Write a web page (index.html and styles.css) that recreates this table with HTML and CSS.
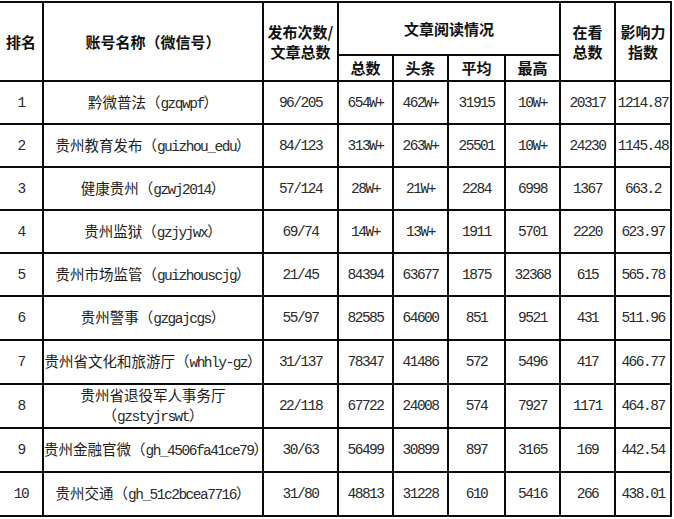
FILE: index.html
```html
<!DOCTYPE html>
<html lang="zh-CN">
<head>
<meta charset="utf-8">
<title>贵州政务微信排行</title>
<link rel="stylesheet" href="styles.css">
</head>
<body>
<table class="rank">
  <colgroup>
    <col class="c-rank"><col class="c-name"><col class="c-pub">
    <col class="c-n"><col class="c-n"><col class="c-avg"><col class="c-n">
    <col class="c-n"><col class="c-idx">
  </colgroup>
  <thead>
    <tr class="h-top">
      <th rowspan="2">排名</th>
      <th rowspan="2">账号名称（微信号）</th>
      <th rowspan="2">发布次数/<br>文章总数</th>
      <th colspan="4">文章阅读情况</th>
      <th rowspan="2">在看<br>总数</th>
      <th rowspan="2">影响力<br>指数</th>
    </tr>
    <tr class="h-sub">
      <th>总数</th><th>头条</th><th>平均</th><th>最高</th>
    </tr>
  </thead>
  <tbody>
    <tr><td class="num">1</td><td class="name">黔微普法（<span class="id">gzqwpf</span>）</td><td class="num">96/205</td><td class="num">654W+</td><td class="num">462W+</td><td class="num">31915</td><td class="num">10W+</td><td class="num">20317</td><td class="num">1214.87</td></tr>
    <tr><td class="num">2</td><td class="name">贵州教育发布（<span class="id">guizhou_edu</span>）</td><td class="num">84/123</td><td class="num">313W+</td><td class="num">263W+</td><td class="num">25501</td><td class="num">10W+</td><td class="num">24230</td><td class="num">1145.48</td></tr>
    <tr><td class="num">3</td><td class="name">健康贵州（<span class="id">gzwj2014</span>）</td><td class="num">57/124</td><td class="num">28W+</td><td class="num">21W+</td><td class="num">2284</td><td class="num">6998</td><td class="num">1367</td><td class="num">663.2</td></tr>
    <tr><td class="num">4</td><td class="name">贵州监狱（<span class="id">gzjyjwx</span>）</td><td class="num">69/74</td><td class="num">14W+</td><td class="num">13W+</td><td class="num">1911</td><td class="num">5701</td><td class="num">2220</td><td class="num">623.97</td></tr>
    <tr><td class="num">5</td><td class="name">贵州市场监管（<span class="id">guizhouscjg</span>）</td><td class="num">21/45</td><td class="num">84394</td><td class="num">63677</td><td class="num">1875</td><td class="num">32368</td><td class="num">615</td><td class="num">565.78</td></tr>
    <tr><td class="num">6</td><td class="name">贵州警事（<span class="id">gzgajcgs</span>）</td><td class="num">55/97</td><td class="num">82585</td><td class="num">64600</td><td class="num">851</td><td class="num">9521</td><td class="num">431</td><td class="num">511.96</td></tr>
    <tr><td class="num">7</td><td class="name">贵州省文化和旅游厅（<span class="id">whhly-gz</span>）</td><td class="num">31/137</td><td class="num">78347</td><td class="num">41486</td><td class="num">572</td><td class="num">5496</td><td class="num">417</td><td class="num">466.77</td></tr>
    <tr><td class="num">8</td><td class="name wrap">贵州省退役军人事务厅<br>（<span class="id">gzstyjrswt</span>）</td><td class="num">22/118</td><td class="num">67722</td><td class="num">24008</td><td class="num">574</td><td class="num">7927</td><td class="num">1171</td><td class="num">464.87</td></tr>
    <tr><td class="num">9</td><td class="name">贵州金融官微（<span class="id">gh_4506fa41ce79</span>）</td><td class="num">30/63</td><td class="num">56499</td><td class="num">30899</td><td class="num">897</td><td class="num">3165</td><td class="num">169</td><td class="num">442.54</td></tr>
    <tr><td class="num">10</td><td class="name">贵州交通（<span class="id">gh_51c2bcea7716</span>）</td><td class="num">31/80</td><td class="num">48813</td><td class="num">31228</td><td class="num">610</td><td class="num">5416</td><td class="num">266</td><td class="num">438.01</td></tr>
  </tbody>
</table>
</body>
</html>
```

FILE: styles.css
```css
html, body {
  margin: 0;
  padding: 0;
  background: #ffffff;
}
body {
  font-family: "Noto Sans CJK SC", "Noto Sans", sans-serif;
  color: #1c1c1c;
  overflow: hidden;
}
.rank {
  border-collapse: collapse;
  table-layout: fixed;
  width: 672px;
  margin-left: -2px;
  margin-top: 1px;
}
.c-rank { width: 44px; }
.c-name { width: 220px; }
.c-pub { width: 75px; }
.c-n { width: 55px; }
.c-avg { width: 57px; }
.c-idx { width: 56px; }

.rank th,
.rank td {
  border: 2px solid #0a0a0a;
  padding: 0;
  text-align: center;
  vertical-align: middle;
  overflow: hidden;
  white-space: nowrap;
}
.rank th {
  font-size: 15px;
  line-height: 20px;
  font-weight: 700;
  color: #111;
}
.h-top { height: 53px; }
.h-sub { height: 26px; }
.h-sub th { line-height: 18px; }

.rank tbody tr { height: 43px; }
.rank tbody tr:nth-child(n+6) { height: 44px; }
.rank td {
  font-size: 14.5px;
  line-height: 20px;
  font-weight: 400;
}
.num,
.id {
  font-family: "Liberation Mono", "DejaVu Sans Mono", monospace;
  font-size: 14.5px;
  letter-spacing: -1.5px;
  color: #2a2a2a;
}
.name {
  text-align: center;
}
```
